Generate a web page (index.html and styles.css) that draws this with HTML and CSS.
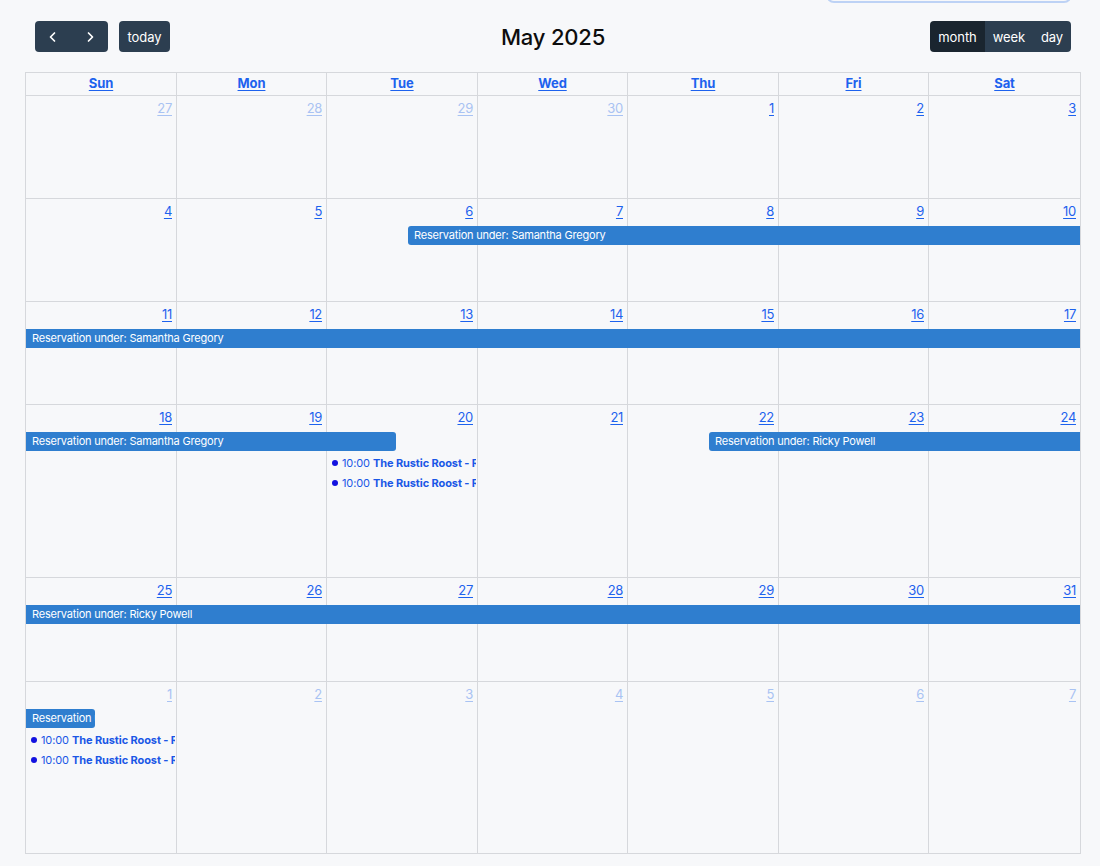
FILE: index.html
```html
<!DOCTYPE html>
<html lang="en">
<head>
<meta charset="utf-8">
<title>Calendar</title>
<link rel="stylesheet" href="styles.css">
</head>
<body>
<div class="page">
  <div class="top-strip"><div class="search-box"></div></div>
  <div class="toolbar">
    <div class="tb-left">
      <div class="btn-group">
        <button class="btn btn-icon" aria-label="prev"><svg width="14" height="14" viewBox="0 0 14 14"><path d="M8.5 3 L4.5 7 L8.5 11" fill="none" stroke="#fff" stroke-width="1.7" stroke-linecap="round" stroke-linejoin="round"/></svg></button>
        <button class="btn btn-icon" aria-label="next"><svg width="14" height="14" viewBox="0 0 14 14"><path d="M5.5 3 L9.5 7 L5.5 11" fill="none" stroke="#fff" stroke-width="1.7" stroke-linecap="round" stroke-linejoin="round"/></svg></button>
      </div>
      <button class="btn btn-solo">today</button>
    </div>
    <h2 class="title">May 2025</h2>
    <div class="tb-right">
      <div class="btn-group">
        <button class="btn active">month</button>
        <button class="btn">week</button>
        <button class="btn">day</button>
      </div>
    </div>
  </div>

  <div class="cal">
    <div class="head">
      <div class="hcell"><a>Sun</a></div>
      <div class="hcell"><a>Mon</a></div>
      <div class="hcell"><a>Tue</a></div>
      <div class="hcell"><a>Wed</a></div>
      <div class="hcell"><a>Thu</a></div>
      <div class="hcell"><a>Fri</a></div>
      <div class="hcell"><a>Sat</a></div>
    </div>

    <div class="week h103">
      <div class="cell c1 other"><a>27</a></div>
      <div class="cell c2 other"><a>28</a></div>
      <div class="cell c3 other"><a>29</a></div>
      <div class="cell c4 other"><a>30</a></div>
      <div class="cell c5"><a>1</a></div>
      <div class="cell c6"><a>2</a></div>
      <div class="cell c7"><a>3</a></div>
    </div>

    <div class="week h103">
      <div class="cell c1"><a>4</a></div>
      <div class="cell c2"><a>5</a></div>
      <div class="cell c3"><a>6</a></div>
      <div class="cell c4"><a>7</a></div>
      <div class="cell c5"><a>8</a></div>
      <div class="cell c6"><a>9</a></div>
      <div class="cell c7"><a>10</a></div>
      <div class="bar from-tue">Reservation under: Samantha Gregory</div>
    </div>

    <div class="week h103">
      <div class="cell c1"><a>11</a></div>
      <div class="cell c2"><a>12</a></div>
      <div class="cell c3"><a>13</a></div>
      <div class="cell c4"><a>14</a></div>
      <div class="cell c5"><a>15</a></div>
      <div class="cell c6"><a>16</a></div>
      <div class="cell c7"><a>17</a></div>
      <div class="bar full">Reservation under: Samantha Gregory</div>
    </div>

    <div class="week h173">
      <div class="cell c1"><a>18</a></div>
      <div class="cell c2"><a>19</a></div>
      <div class="cell c3"><a>20</a></div>
      <div class="cell c4"><a>21</a></div>
      <div class="cell c5"><a>22</a></div>
      <div class="cell c6"><a>23</a></div>
      <div class="cell c7"><a>24</a></div>
      <div class="bar to-tue">Reservation under: Samantha Gregory</div>
      <div class="bar from-thu">Reservation under: Ricky Powell</div>
      <div class="dot-ev col-tue r3"><span class="dot"></span><span class="time">10:00</span> <b>The Rustic Roost - Reservation</b></div>
      <div class="dot-ev col-tue r4"><span class="dot"></span><span class="time">10:00</span> <b>The Rustic Roost - Reservation</b></div>
    </div>

    <div class="week h104">
      <div class="cell c1"><a>25</a></div>
      <div class="cell c2"><a>26</a></div>
      <div class="cell c3"><a>27</a></div>
      <div class="cell c4"><a>28</a></div>
      <div class="cell c5"><a>29</a></div>
      <div class="cell c6"><a>30</a></div>
      <div class="cell c7"><a>31</a></div>
      <div class="bar full">Reservation under: Ricky Powell</div>
    </div>

    <div class="week h172">
      <div class="cell c1 other"><a>1</a></div>
      <div class="cell c2 other"><a>2</a></div>
      <div class="cell c3 other"><a>3</a></div>
      <div class="cell c4 other"><a>4</a></div>
      <div class="cell c5 other"><a>5</a></div>
      <div class="cell c6 other"><a>6</a></div>
      <div class="cell c7 other"><a>7</a></div>
      <div class="bar to-sun">Reservation under: Ricky Powell</div>
      <div class="dot-ev col-sun r3"><span class="dot"></span><span class="time">10:00</span> <b>The Rustic Roost - Reservation</b></div>
      <div class="dot-ev col-sun r4"><span class="dot"></span><span class="time">10:00</span> <b>The Rustic Roost - Reservation</b></div>
    </div>
  </div>
</div>
</body>
</html>
```

FILE: styles.css
```css
* { box-sizing: border-box; }

html, body {
  margin: 0;
  padding: 0;
  background: #f7f8fa;
}

body {
  font-family: Inter, "Noto Sans", "Liberation Sans", sans-serif;
  color: #111;
  width: 1100px;
  height: 866px;
  overflow: hidden;
}

.page {
  padding: 0 19px 0 25px;
}

.top-strip {
  display: flex;
  justify-content: flex-end;
  padding-right: 9px;
}

.search-box {
  width: 246px;
  height: 34px;
  margin-top: -31px;
  border: 2.5px solid #bdd2f5;
  border-radius: 8px;
}

.toolbar {
  display: flex;
  align-items: center;
  justify-content: space-between;
  padding: 0 10px;
  margin-top: 18px;
  margin-bottom: 20px;
  height: 31px;
}

.tb-left {
  display: flex;
  align-items: center;
  gap: 11px;
  width: 300px;
}

.tb-right {
  display: flex;
  justify-content: flex-end;
  width: 300px;
}

.title {
  margin: 0;
  font-size: 22px;
  font-weight: 500;
  letter-spacing: -0.2px;
  color: #0d0d0d;
}

.btn-group {
  display: flex;
}

.btn {
  height: 31px;
  border: 0;
  margin: 0;
  background: #2c3e50;
  color: #fff;
  font-family: Inter, "Noto Sans", "Liberation Sans", sans-serif;
  font-size: 13px;
  letter-spacing: -0.1px;
  padding: 0 8px;
  cursor: pointer;
}

.btn-group .btn:first-child {
  border-radius: 4px 0 0 4px;
}

.btn-group .btn:last-child {
  border-radius: 0 4px 4px 0;
}

.btn.active {
  background: #1a252f;
}

.btn-icon {
  width: 36.5px;
  display: flex;
  align-items: center;
  justify-content: center;
  padding: 0;
}

.btn-solo {
  border-radius: 4px;
  width: 51px;
  padding: 0;
}

.cal {
  width: 1056px;
  border-right: 1px solid #d6d8dc;
  border-bottom: 1px solid #d6d8dc;
}

.head,
.week {
  display: grid;
  grid-template-columns: 151px 150px 151px 150px 151px 150px minmax(0, 1fr);
}

.head {
  height: 23px;
}

.hcell {
  border-top: 1px solid #d6d8dc;
  border-left: 1px solid #d6d8dc;
  text-align: center;
  font-size: 13px;
  font-weight: 700;
  line-height: 21px;
  letter-spacing: -0.1px;
}

.hcell a, .cell a {
  color: #1d62ee;
  text-decoration: underline;
  text-underline-offset: 2px;
}

.week {
  grid-template-rows: 28px 21px 20px 20px 1fr;
}

.h103 { height: 103px; }
.h104 { height: 104px; }
.h172 { height: 172px; }
.h173 { height: 173px; }

.cell {
  grid-row: 1 / -1;
  border-top: 1px solid #d6d8dc;
  border-left: 1px solid #d6d8dc;
  text-align: right;
  padding: 3px 4px 0 0;
  font-size: 13px;
  line-height: 18px;
  letter-spacing: -0.3px;
}

.c1 { grid-column: 1; }
.c2 { grid-column: 2; }
.c3 { grid-column: 3; }
.c4 { grid-column: 4; }
.c5 { grid-column: 5; }
.c6 { grid-column: 6; }
.c7 { grid-column: 7; }

.cell.other a {
  color: #a9c3f3;
}

.bar {
  grid-row: 2;
  align-self: start;
  height: 19px;
  line-height: 19px;
  background: #2f7ecf;
  color: #fff;
  font-size: 11px;
  letter-spacing: -0.2px;
  padding: 0 0 0 6px;
  white-space: nowrap;
  overflow: hidden;
  min-width: 0;
}

.bar.full {
  grid-column: 1 / 8;
  margin-left: 1px;
}

.bar.from-tue {
  grid-column: 3 / 8;
  margin-left: 82px;
  border-radius: 3px 0 0 3px;
}

.bar.from-thu {
  grid-column: 5 / 8;
  margin-left: 82px;
  border-radius: 3px 0 0 3px;
}

.bar.to-tue {
  grid-column: 1 / 4;
  margin-left: 1px;
  margin-right: 81px;
  border-radius: 0 3px 3px 0;
}

.bar.to-sun {
  grid-column: 1 / 2;
  margin-left: 1px;
  margin-right: 81px;
  border-radius: 0 3px 3px 0;
}

.dot-ev {
  display: flex;
  align-items: center;
  gap: 3px;
  min-width: 0;
  overflow: hidden;
  white-space: nowrap;
  height: 20px;
  font-size: 11px;
  letter-spacing: -0.1px;
  color: #1a57e6;
  padding-left: 6px;
  margin-right: 1px;
}

.dot-ev b {
  font-weight: 700;
}

.dot {
  flex: none;
  width: 6px;
  height: 6px;
  border-radius: 50%;
  background: #1212e0;
  margin-right: 1px;
}

.time {
  flex: none;
}

.col-tue { grid-column: 3; }
.col-sun { grid-column: 1; }
.r3 { grid-row: 3; }
.r4 { grid-row: 4; }
```
